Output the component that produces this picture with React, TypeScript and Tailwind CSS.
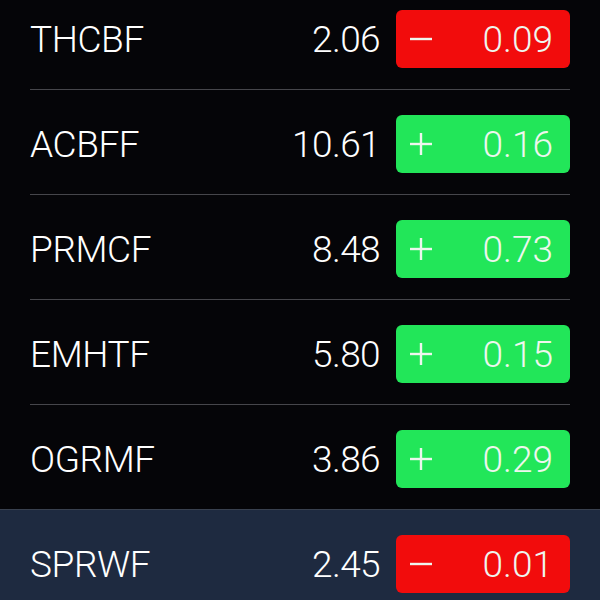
const stocks = [
  { symbol: "THCBF", price: "2.06", change: "0.09", up: false },
  { symbol: "ACBFF", price: "10.61", change: "0.16", up: true },
  { symbol: "PRMCF", price: "8.48", change: "0.73", up: true },
  { symbol: "EMHTF", price: "5.80", change: "0.15", up: true },
  { symbol: "OGRMF", price: "3.86", change: "0.29", up: true },
  { symbol: "SPRWF", price: "2.45", change: "0.01", up: false, selected: true },
];

function Sign({ up }: { up: boolean }) {
  return (
    <svg width="24" height="24" viewBox="0 0 24 24" className="shrink-0">
      <line x1="1" y1="12" x2="23" y2="12" stroke="#eef6ee" strokeWidth="2.4" />
      {up && <line x1="12" y1="1" x2="12" y2="23" stroke="#eef6ee" strokeWidth="2.4" />}
    </svg>
  );
}

function Row({ stock, last }: { stock: (typeof stocks)[number]; last: boolean }) {
  return (
    <div
      className={
        stock.selected
          ? "bg-[#1e2a40] border-t border-[#39414f] -mt-px"
          : "bg-transparent"
      }
    >
      <div className="px-[30px]">
        <div
          className={
            "flex items-center pt-[25px] pb-[21px] " +
            (last || stock.selected ? "" : "border-b border-[#46464b]")
          }
        >
          <div className="flex-1 text-[37px] font-light leading-none text-white tracking-[-0.4px]">
            {stock.symbol}
          </div>
          <div className="text-[37px] font-light leading-none text-white mr-[16px] tracking-[-0.6px]">
            {stock.price}
          </div>
          <div
            className={
              "w-[174px] h-[58px] rounded-[6px] flex items-center justify-between pl-[13px] pr-[17px] leading-none text-[#eef6ee] " +
              (stock.up ? "bg-[#22e659]" : "bg-[#f20c0c]")
            }
          >
            <Sign up={stock.up} />
            <span className="text-[37px] font-light tracking-[0px]">
              {stock.change}
            </span>
          </div>
        </div>
      </div>
    </div>
  );
}

export default function App() {
  return (
    <div
      className="w-[600px] h-[600px] overflow-hidden bg-[#050508]"
      style={{ fontFamily: "Roboto, 'Liberation Sans', sans-serif" }}
    >
      <div className="-mt-[15px]">
        {stocks.map((s, i) => (
          <Row key={s.symbol} stock={s} last={i === stocks.length - 1} />
        ))}
      </div>
    </div>
  );
}
